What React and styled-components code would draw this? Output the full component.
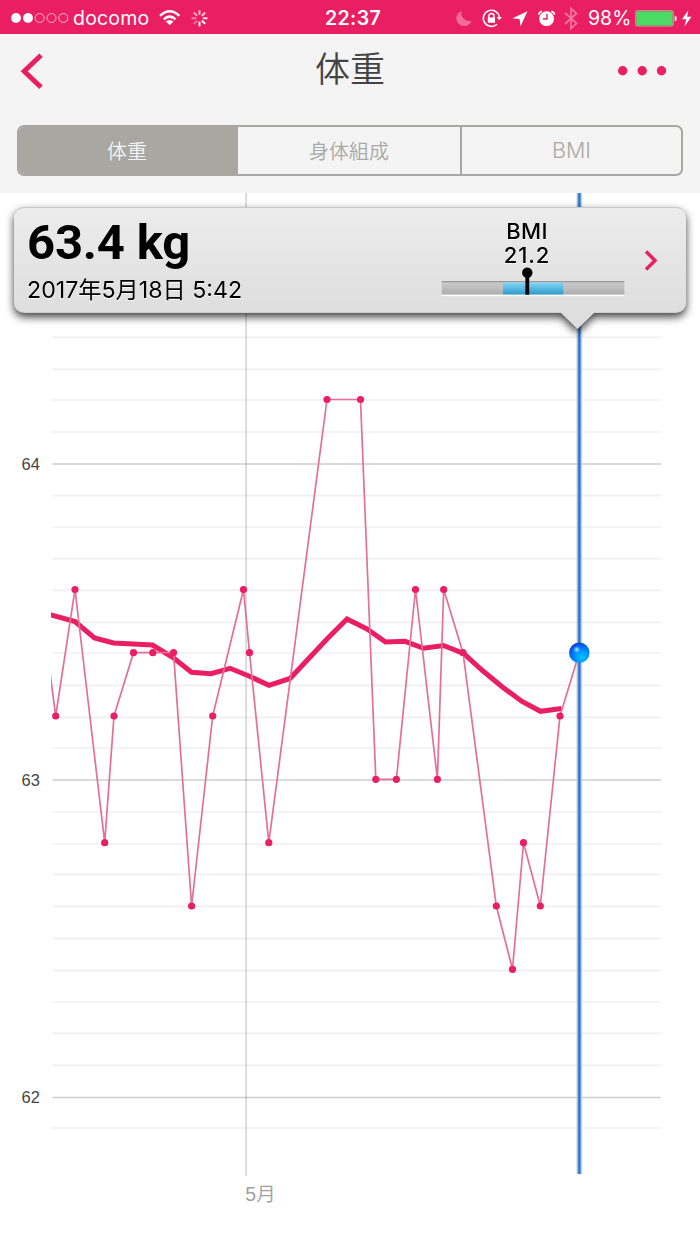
import React, { useState } from 'react';
import styled, { createGlobalStyle } from 'styled-components';

const PINK = '#ea1e63';
const GRAY = '#a8a7a2';

const GlobalStyle = createGlobalStyle`
  * {
    box-sizing: border-box;
  }

  body {
    margin: 0;
    background: #fff;
    font-family: Inter, 'Noto Sans CJK JP', sans-serif;
  }

  svg {
    display: block;
    flex-shrink: 0;
    overflow: visible;
  }
`;

const Screen = styled.div`
  width: 700px;
  height: 1244px;
  display: flex;
  flex-direction: column;
  overflow: hidden;
`;

const StatusBar = styled.div`
  display: grid;
  grid-template-columns: 325px 1fr 244px;
  align-items: center;
  height: 34px;
  background: ${PINK};
  color: #fff;
  font-size: 20px;
  line-height: 34px;
`;

const StatusGroup = styled.div`
  display: flex;
  align-items: center;
  height: 34px;
  padding-left: ${(props) => props.$start || 0}px;
`;

const StatusText = styled.span`
  width: ${(props) => props.$width}px;
  font-weight: ${(props) => props.$weight || 400};
  font-size: ${(props) => props.$size || 20}px;
  letter-spacing: ${(props) => props.$spacing || 0}px;
  white-space: nowrap;
  padding-top: 1px;
`;

const Header = styled.header`
  height: 159px;
  background: #f4f4f4;
`;

const NavBar = styled.div`
  display: grid;
  grid-template-columns: 100px 1fr 100px;
  align-items: center;
  height: 74px;
`;

const IconButton = styled.button`
  display: flex;
  justify-content: ${(props) => props.$align};
  padding: 0 ${(props) => (props.$align === 'flex-end' ? 32 : 20)}px;
  border: none;
  background: none;
  cursor: pointer;
`;

const Title = styled.h1`
  margin: 0;
  padding-bottom: 8px;
  text-align: center;
  font-family: 'Noto Sans CJK JP', sans-serif;
  font-size: 35px;
  line-height: 50px;
  font-weight: 350;
  color: #444;
`;

const Tabs = styled.div`
  display: grid;
  grid-template-columns: 219px 222px 1fr;
  width: 666px;
  height: 51px;
  margin: 17px 0 0 17px;
  border: 2px solid ${GRAY};
  border-radius: 7px;
  overflow: hidden;
`;

const Tab = styled.button`
  padding: 0 ${(props) => (props.$divided ? 0 : 3)}px 1px 0;
  border: none;
  border-left: ${(props) => (props.$divided ? `2px solid ${GRAY}` : 'none')};
  background: ${(props) => (props.$active ? GRAY : 'transparent')};
  color: ${(props) => (props.$active ? '#f4f4f4' : '#aaa9a5')};
  font-family: Inter, 'Noto Sans CJK JP', sans-serif;
  font-size: ${(props) => props.$size || 20}px;
  font-weight: 350;
  cursor: pointer;

  &:nth-child(2) {
    padding-right: 0;
  }
`;

const ChartArea = styled.main`
  position: relative;
  flex: 1;
`;

const Tooltip = styled.section`
  position: absolute;
  top: 14px;
  left: 14px;
  width: 672px;
  height: 106px;
  filter: drop-shadow(0 4px 4px rgba(0, 0, 0, 0.75));

  &::after {
    content: '';
    position: absolute;
    top: 105px;
    left: 546px;
    width: 35px;
    height: 17px;
    background: #dedede;
    clip-path: polygon(0 0, 100% 0, 50% 100%);
  }
`;

const TooltipBody = styled.div`
  display: grid;
  grid-template-columns: 427px 184px 1fr;
  height: 106px;
  border-radius: 10px;
  border-top: 1px solid #c9c9c9;
  border-bottom: 1px solid #cfcfcf;
  background: linear-gradient(#ececec, #dedede);
  color: #000;
  text-shadow: 0 1px 0 #fff;
`;

const Reading = styled.div`
  display: flex;
  flex-direction: column;
  padding: 6px 0 0 13px;
`;

const Weight = styled.strong`
  font-family: Roboto, sans-serif;
  font-size: 49px;
  line-height: 58px;
  letter-spacing: -0.2px;
  font-weight: 700;
  text-shadow: none;
`;

const DateText = styled.span`
  margin-top: 4px;
  font-size: 23.2px;
  line-height: 28px;
  white-space: nowrap;
`;

const Bmi = styled.div`
  display: flex;
  flex-direction: column;
  align-items: center;
  padding: 11px 12px 0 0;
  font-size: 22px;
  line-height: 24px;
  font-weight: 550;
`;

const BmiLabel = styled.span`
  letter-spacing: 0.4px;
`;

const BmiValue = styled.span`
  letter-spacing: 0.9px;
`;

const GaugeSlot = styled.div`
  width: 184px;
  margin: 1px -12px 0 0;
`;

const MoreSlot = styled.div`
  padding: 41px 0 0 18px;
`;

const AxisText = styled.text`
  font-family: 'Liberation Sans', 'Noto Sans CJK JP', sans-serif;
  font-size: ${(props) => props.$size}px;
  font-weight: 350;
  fill: ${(props) => props.$color};
`;

const MINOR_LINES = [
  337.3, 369.3, 400, 432, 495.7, 527, 558.7, 590.3, 622.3, 653, 685.3, 717.3, 748,
  812, 844, 874.3, 906.3, 938.7, 970.7, 1002, 1033.3, 1065.3, 1128,
];

const MAJOR_LINES = [
  { y: 464, label: '64' },
  { y: 780, label: '63' },
  { y: 1097.5, label: '62' },
];

const READINGS = [
  [45, 635], [55.7, 716], [75, 589.5], [104.7, 842.7], [114, 716], [133.5, 652.7],
  [152.8, 652.7], [173.5, 652.7], [191.6, 906], [212.7, 716], [243.5, 589.5],
  [249.5, 652.7], [268.8, 842.7], [327, 399.5], [360.5, 399.5], [375.8, 779.3],
  [396.4, 779.3], [415.5, 589.5], [437.4, 779.3], [443.7, 589.5], [463, 652.7],
  [496.3, 906], [512.5, 969.3], [523.5, 842.7], [540.3, 906], [560, 716], [579.3, 652.7],
];

const TREND = [
  [40, 612.5], [51, 615], [75, 621.5], [94.5, 638], [113.5, 643], [152.5, 645],
  [173, 657.5], [191.5, 672.3], [211, 673.7], [230, 668.3], [249.5, 676.3],
  [269, 685.3], [290, 678.5], [327, 639], [347, 619], [367, 629], [385.5, 642],
  [405, 641.3], [423.5, 648.3], [443.5, 645.5], [463.5, 653.5], [483, 671],
  [503, 687.5], [522, 701.5], [540.5, 711.3], [561.5, 708.5],
];

const toPoints = (list) => list.map((point) => point.join(',')).join(' ');

function Signal() {
  return (
    <svg width="62" height="34" viewBox="11 0 62 34">
      {[16, 28].map((x) => (
        <circle key={x} cx={x} cy="17" r="4.9" fill="#fff" />
      ))}
      {[39.7, 51.5, 63.3].map((x) => (
        <circle key={x} cx={x} cy="17" r="4.5" fill="none" stroke="#fff" strokeOpacity=".65" />
      ))}
    </svg>
  );
}

function WifiAndSpinner() {
  return (
    <svg width="55" height="34" viewBox="156 0 55 34">
      <g fill="none" stroke="#fff" strokeWidth="2.5">
        <path d="M160 14.8Q169.7 5.8 179.3 14.8" />
        <path d="M163.8 18.4Q169.7 12.8 175.5 18.4" />
      </g>
      <path d="M165.9 20.6Q169.7 17.4 173.4 20.6L169.7 24.3Z" fill="#fff" />
      {[0, 1, 2, 3, 4, 5, 6, 7].map((i) => (
        <line
          key={i}
          x1="199.5"
          y1="13"
          x2="199.5"
          y2="10"
          stroke="#fff"
          strokeWidth="2"
          strokeLinecap="round"
          opacity={[0.75, 0.8, 0.9, 1, 1, 0.35, 0.45, 0.6][i]}
          transform={`rotate(${i * 45} 199.5 17.2)`}
        />
      ))}
    </svg>
  );
}

function StatusIcons() {
  return (
    <svg width="132" height="34" viewBox="456 0 132 34">
      <path
        d="M461.6 9.9A7.8 7.8 0 1 0 471.6 19.7A8 8 0 0 1 461.6 9.9Z"
        fill="#fff"
        opacity=".35"
      />
      <g fill="none" stroke="#fff" strokeWidth="1.5">
        <path d="M499.5 16.5A8.1 8.1 0 1 0 497 23.2" />
        <path d="M488.8 17V15.2A2.6 2.6 0 0 1 494 15.2V17" />
      </g>
      <path d="M487.8 16.5H495V21.8H487.8ZM496.7 16H502L499.3 19.3Z" fill="#fff" />
      <path d="M527.5 10.2L512.5 17.3L519.6 18.2L520.5 25.3Z" fill="#fff" />
      <circle cx="546.6" cy="17.7" r="7.4" fill="#fff" />
      <path
        d="M538.8 13.6Q539 10.9 542 10.3M551.2 10.3Q554.2 10.9 554.4 13.6"
        fill="none"
        stroke="#fff"
        strokeWidth="1.8"
      />
      <path d="M547 12.8V18H542.8" fill="none" stroke={PINK} strokeWidth="1.4" />
      <path
        d="M565 11.8L576.5 22.3L571 27.5V7.5L576.5 12.5L565 23"
        fill="none"
        stroke="#fff"
        strokeWidth="1.7"
        opacity=".4"
      />
    </svg>
  );
}

function Battery() {
  return (
    <svg width="62" height="34" viewBox="634 0 62 34">
      <rect x="635.7" y="9.7" width="37.6" height="15.4" rx="2.5" fill="none" stroke="#b88f8d" strokeWidth="1.4" />
      <rect x="636.3" y="10.4" width="36.3" height="14" rx="1.5" fill="#4cd964" />
      <path d="M674.6 14.5Q677 15 677 17.4Q677 19.8 674.6 20.4Z" fill="#fff" opacity=".8" />
      <path d="M688.3 9.3L682 18.3H686.3L684.4 25.5L691.5 15.7H687.1Z" fill="#fff" />
    </svg>
  );
}

function Gauge() {
  return (
    <svg width="184" height="30" viewBox="441 267 184 30">
      <defs>
        <linearGradient id="track" x1="0" y1="0" x2="0" y2="1">
          <stop offset="0" stopColor="#cecece" />
          <stop offset="1" stopColor="#adadad" />
        </linearGradient>
        <linearGradient id="range" x1="0" y1="0" x2="0" y2="1">
          <stop offset="0" stopColor="#81d5f6" />
          <stop offset="1" stopColor="#2c9bca" />
        </linearGradient>
      </defs>
      <rect x="441.7" y="280.4" width="182.6" height="13.3" fill="url(#track)" />
      <rect x="441.7" y="280" width="182.6" height="1.3" fill="#999" />
      <rect x="503" y="281.6" width="60.3" height="12.1" fill="url(#range)" />
      <rect x="441.7" y="293.7" width="182.6" height="1.4" fill="#fff" />
      <circle cx="527.3" cy="271.7" r="5.2" />
      <rect x="525.4" y="272" width="3.8" height="21.7" />
    </svg>
  );
}

function WeightChart() {
  return (
    <svg width="700" height="1051" viewBox="0 193 700 1051">
      <defs>
        <radialGradient id="ball" cx=".62" cy=".72" r=".75">
          <stop offset="0" stopColor="#00c8ff" />
          <stop offset=".45" stopColor="#0090ff" />
          <stop offset=".85" stopColor="#0656f2" />
          <stop offset="1" stopColor="#0736bb" />
        </radialGradient>
        <radialGradient id="shine">
          <stop offset="0" stopColor="#c8ffff" />
          <stop offset="1" stopColor="#2dafff" stopOpacity="0" />
        </radialGradient>
        <clipPath id="plot">
          <rect x="51" y="193" width="611" height="985" />
        </clipPath>
      </defs>

      {MINOR_LINES.map((y) => (
        <line key={y} x1="52.5" x2="661" y1={y} y2={y} stroke="#f0f0f0" strokeWidth="1.7" />
      ))}
      {MAJOR_LINES.map(({ y, label }) => (
        <g key={label}>
          <line x1="52.5" x2="661" y1={y} y2={y} stroke="#cecece" strokeWidth="1.7" />
          <AxisText x="21.5" y={y + 5.6} $size="16.5" $color="#444">{label}</AxisText>
        </g>
      ))}
      <line x1="246.1" x2="246.1" y1="193" y2="1176" stroke="#000" strokeOpacity=".15" strokeWidth="1.8" />
      <AxisText x="245.3" y="1200.5" $size="19.5" $color="#a0a0a0">5月</AxisText>

      <g clipPath="url(#plot)">
        <polyline points={toPoints(TREND)} fill="none" stroke={PINK} strokeWidth="5" />
        <polyline points={toPoints(READINGS)} fill="none" stroke="#e66f98" strokeWidth="1.7" />
        {READINGS.slice(1, -1).map(([x, y]) => (
          <circle key={`${x}-${y}`} cx={x} cy={y} r="3.6" fill={PINK} />
        ))}
      </g>

      <rect x="576.3" y="193" width="6" height="981" fill="#b4b9c0" opacity=".5" />
      <rect x="577.3" y="193" width="4" height="981" fill="#8fb8e8" />
      <rect x="578.2" y="193" width="2.2" height="981" fill="#3274c8" />
      <circle cx="579.3" cy="652.8" r="10.2" fill="url(#ball)" />
      <circle cx="576.7" cy="649.6" r="4" fill="url(#shine)" />
    </svg>
  );
}

const TABS = [
  { id: 'weight', label: '体重' },
  { id: 'body', label: '身体組成' },
  { id: 'bmi', label: 'BMI', size: 21.5 },
];

function App() {
  const [tab, setTab] = useState('weight');

  return (
    <>
      <GlobalStyle />
      <Screen>
        <StatusBar>
          <StatusGroup $start={11}>
            <Signal />
            <StatusText $width={83} $size={19.5} $spacing={0.2}>docomo</StatusText>
            <WifiAndSpinner />
          </StatusGroup>
          <StatusText $width={60} $weight={600} $size={19.5} $spacing={0.4}>22:37</StatusText>
          <StatusGroup>
            <StatusIcons />
            <StatusText $width={46} $size={19.5}>98%</StatusText>
            <Battery />
          </StatusGroup>
        </StatusBar>

        <Header>
          <NavBar>
            <IconButton $align="flex-start" aria-label="Back">
              <svg width="24" height="38" viewBox="20 52 24 38">
                <path d="M41 55.3L24.2 71.3L41 87.3" fill="none" stroke={PINK} strokeWidth="5" />
              </svg>
            </IconButton>
            <Title>体重</Title>
            <IconButton $align="flex-end" aria-label="More">
              <svg width="52" height="12" viewBox="616 65 52 12">
                {[622.7, 642.2, 661.5].map((x) => (
                  <circle key={x} cx={x} cy="70.7" r="4.7" fill={PINK} />
                ))}
              </svg>
            </IconButton>
          </NavBar>
          <Tabs>
            {TABS.map(({ id, label, size }, i) => (
              <Tab
                key={id}
                $active={tab === id}
                $divided={i === 2}
                $size={size}
                onClick={() => setTab(id)}
              >
                {label}
              </Tab>
            ))}
          </Tabs>
        </Header>

        <ChartArea>
          <WeightChart />
          <Tooltip>
            <TooltipBody>
              <Reading>
                <Weight>63.4 kg</Weight>
                <DateText>2017年5月18日 5:42</DateText>
              </Reading>
              <Bmi>
                <BmiLabel>BMI</BmiLabel>
                <BmiValue>21.2</BmiValue>
                <GaugeSlot>
                  <Gauge />
                </GaugeSlot>
              </Bmi>
              <MoreSlot>
                <svg width="16" height="22" viewBox="643 249 16 22">
                  <path d="M646 251.5L655 260.5L646 269.5" fill="none" stroke={PINK} strokeWidth="3.5" />
                </svg>
              </MoreSlot>
            </TooltipBody>
          </Tooltip>
        </ChartArea>
      </Screen>
    </>
  );
}

export default App;
